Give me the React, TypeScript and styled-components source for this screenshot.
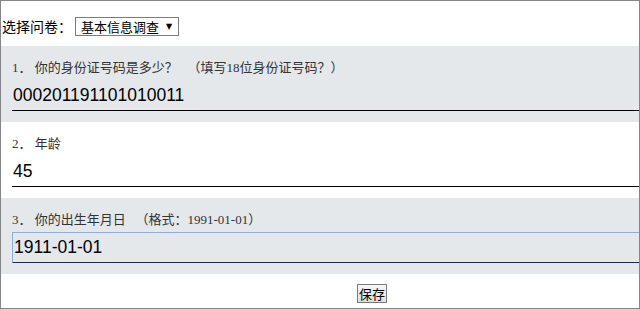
import React from 'react'
import styled, { createGlobalStyle } from 'styled-components'

const GlobalStyle = createGlobalStyle`
    html, body {
        margin: 0;
        padding: 0;
        background: #ffffff;
    }
`

type Question = {
    no: number
    title: string
    hint?: string
    value: string
}

const questions: Question[] = [
    { no: 1, title: '你的身份证号码是多少？', hint: '（填写18位身份证号码？）', value: '000201191101010011' },
    { no: 2, title: '年龄', value: '45' },
    { no: 3, title: '你的出生年月日', hint: '（格式：1991-01-01）', value: '1911-01-01' },
]

export default function App() {
    return (
        <>
            <GlobalStyle />
            <Frame>
                <TopBar>
                    <PickLabel>选择问卷：</PickLabel>
                    <SelectBox>
                        <SelectText>基本信息调查</SelectText>
                        <SelectArrow>▼</SelectArrow>
                    </SelectBox>
                </TopBar>
                {questions.map((q, i) => (
                    <Section key={q.no} $shaded={i % 2 === 0}>
                        <QuestionLabel>
                            {q.no}． {q.title}
                            {q.hint ? '   ' + q.hint : null}
                        </QuestionLabel>
                        <AnswerInput readOnly defaultValue={q.value} $focused={q.no === 3} />
                    </Section>
                ))}
                <Footer>
                    <SaveButton>保存</SaveButton>
                </Footer>
            </Frame>
        </>
    )
}

const Frame = styled.div`
    width: 640px;
    height: 309px;
    box-sizing: border-box;
    border: 1px solid #868686;
    overflow: hidden;
    background: #ffffff;
    font-family: 'Noto Sans CJK SC', sans-serif;
`

const TopBar = styled.div`
    display: flex;
    align-items: flex-start;
    height: 45px;
    box-sizing: border-box;
    padding: 16px 0 0 1px;
`

const PickLabel = styled.span`
    font-size: 14px;
    line-height: 19px;
    color: #000;
`

const SelectBox = styled.div`
    display: flex;
    align-items: center;
    width: 104px;
    height: 19px;
    box-sizing: border-box;
    margin-left: 3px;
    padding-left: 5px;
    border: 1px solid #7d7d7d;
    background: #ffffff;
`

const SelectText = styled.span`
    font-size: 13px;
    line-height: 17px;
    color: #000;
`

const SelectArrow = styled.span`
    margin-left: 7px;
    font-size: 8px;
    line-height: 17px;
    color: #000;
    font-family: 'DejaVu Sans', sans-serif;
`

const Section = styled.div<{ $shaded: boolean }>`
    display: flex;
    flex-direction: column;
    height: 76px;
    box-sizing: border-box;
    padding: 14px 0 11px 11px;
    background: ${(props) => (props.$shaded ? '#e4e8eb' : '#ffffff')};
`

const QuestionLabel = styled.div`
    white-space: pre;
    font-family: 'Liberation Serif', 'Noto Sans CJK SC', serif;
    font-size: 13px;
    line-height: 16px;
    color: #333;
`

const AnswerInput = styled.input<{ $focused: boolean }>`
    display: block;
    width: calc(100% + 12px);
    height: 31px;
    box-sizing: border-box;
    margin: 4px 0 0 0;
    padding: 0 0 0 1px;
    outline: none;
    background: transparent;
    font-family: 'Liberation Sans', Arial, sans-serif;
    font-size: 17.5px;
    color: #000;
    border: ${(props) => (props.$focused ? '1px solid' : 'none')};
    border-color: #8caee4 #8caee4 #1f2c58 #8caee4;
    border-bottom: 1px solid ${(props) => (props.$focused ? '#1f2c58' : '#000000')};
`

const Footer = styled.div`
    display: flex;
    padding: 10px 0 0 356px;
`

const SaveButton = styled.button`
    width: 30px;
    height: 19px;
    box-sizing: border-box;
    padding: 0;
    border: 1px solid #7a7a7a;
    border-radius: 0;
    background: linear-gradient(#f7f7f7, #dedede);
    font-family: 'Noto Sans CJK SC', sans-serif;
    font-size: 13px;
    line-height: 17px;
    color: #000;
`
